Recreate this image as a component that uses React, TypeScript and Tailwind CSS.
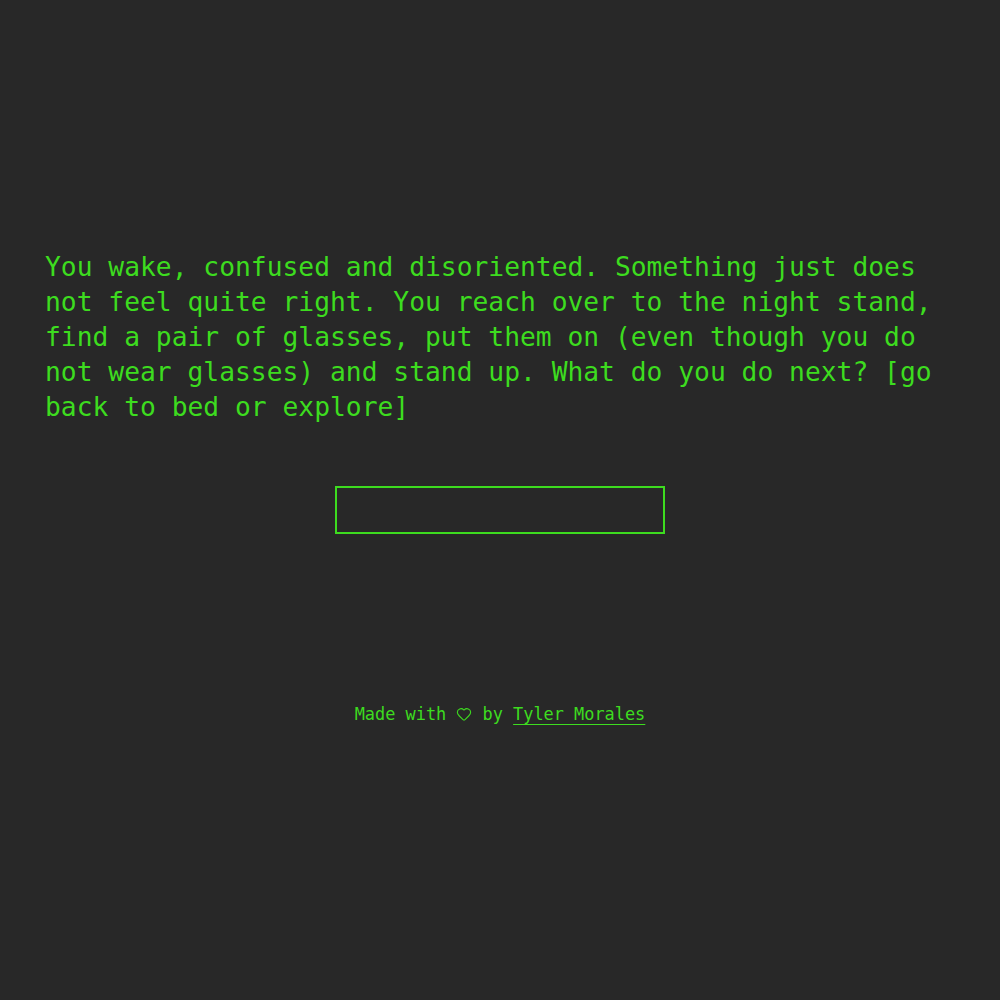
import React from "react";
import { Heart } from "lucide-react";

export default function App() {
  return (
    <div
      className="min-h-screen w-full bg-[#282828] text-[#3ddc1f]"
      style={{ fontFamily: '"DejaVu Sans Mono", "Liberation Mono", monospace' }}
    >
      <main className="px-[45px] pt-[250px] flex flex-col">
        <p className="text-[26.3px] leading-[35px]">
          You wake, confused and disoriented. Something just does not feel quite right. You reach over to the night stand,
          find a pair of glasses, put them on (even though you do not wear glasses) and stand up. What do you do next? [go
          back to bed or explore]
        </p>

        <input
          type="text"
          aria-label="command"
          className="mx-auto mt-[61px] w-[330px] h-[48px] border-2 border-[#3ddc1f] bg-transparent px-3 text-[20px] text-[#3ddc1f] outline-none"
        />

        <footer className="mt-[168px] flex items-center justify-center text-[16.9px] leading-6 whitespace-pre">
          <span>Made with </span>
          <Heart size={16} strokeWidth={1.6} />
          <span> by </span>
          <a href="#" className="underline underline-offset-4 decoration-1">
            Tyler Morales
          </a>
        </footer>
      </main>
    </div>
  );
}
